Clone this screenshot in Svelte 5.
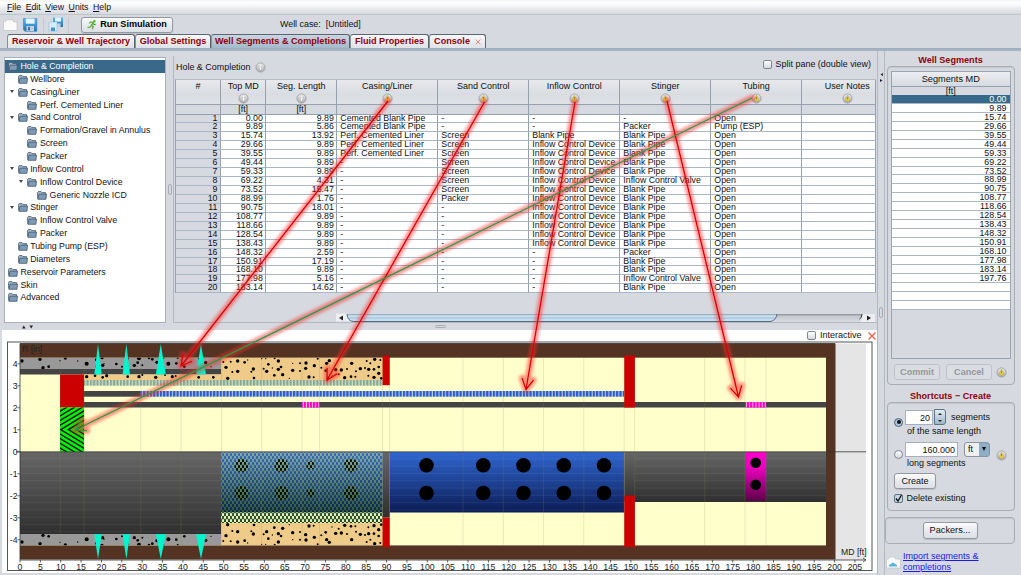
<script>
  const tabs = [
    { t: 'Reservoir & Well Trajectory', w: 128 },
    { t: 'Global Settings', w: 76 },
    { t: 'Well Segments & Completions', w: 139, active: true },
    { t: 'Fluid Properties', w: 79 },
    { t: 'Console', w: 57, close: true }
  ];
  const tree = [
    ['Hole & Completion', 0, 0], ['Wellbore', 1, 0], ['Casing/Liner', 1, 1], ['Perf. Cemented Liner', 2, 0],
    ['Sand Control', 1, 1], ['Formation/Gravel in Annulus', 2, 0], ['Screen', 2, 0], ['Packer', 2, 0],
    ['Inflow Control', 1, 1], ['Inflow Control Device', 2, 1], ['Generic Nozzle ICD', 3, 0],
    ['Stinger', 1, 1], ['Inflow Control Valve', 2, 0], ['Packer', 2, 0], ['Tubing Pump (ESP)', 1, 0],
    ['Diameters', 1, 0], ['Reservoir Parameters', 0, 0], ['Skin', 0, 0], ['Advanced', 0, 0]
  ];
  const heads = [['#', ''], ['Top MD', 'i'], ['Seg. Length', 'i'], ['Casing/Liner', 'w'], ['Sand Control', 'w'],
    ['Inflow Control', 'w'], ['Stinger', 'w'], ['Tubing', 'w'], ['User Notes', 'w']];
  const md = ['0.00', '9.89', '15.74', '29.66', '39.55', '49.44', '59.33', '69.22', '73.52', '88.99', '90.75',
    '108.77', '118.66', '128.54', '138.43', '148.32', '150.91', '168.10', '177.98', '183.14', '197.76'];
  const len = ['9.89', '5.86', '13.92', '9.89', '9.89', '9.89', '9.89', '4.31', '15.47', '1.76', '18.01', '9.89',
    '9.89', '9.89', '9.89', '2.59', '17.19', '9.89', '5.16', '14.62'];
  const rows = len.map((l, i) => [
    i + 1, md[i], l,
    i < 2 ? 'Cemented Blank Pipe' : i < 5 ? 'Perf. Cemented Liner' : '-',
    i < 2 ? '-' : i < 9 ? 'Screen' : i === 9 ? 'Packer' : '-',
    i < 2 ? '-' : i === 2 ? 'Blank Pipe' : i < 15 ? 'Inflow Control Device' : '-',
    i === 0 ? '-' : i === 1 || i === 15 ? 'Packer' : i === 7 || i === 18 ? 'Inflow Control Valve' : 'Blank Pipe',
    i === 1 ? 'Pump (ESP)' : 'Open', ''
  ]);
  const segments = [...md, '', '', ''];

  // Well schematic, in page units
  const X = (v) => 20 + v * 4.073;
  const Y = (r) => 451.8 - r * 22;
  const ticks = Array.from({ length: 42 }, (_, i) => i * 5);
  const radii = [4, 3, 2, 1, 0, -1, -2, -3, -4];
  const perfs = [[98, 3.7], [126.3, 3.7], [160.8, 5], [201, 5]];
  const sand = [[40,96,3],[62,95,3],[48,112,5],[83,93,5],[83,124,5],[53,145,5],[67,126,3],[104,97,4],[113,90,2],[130,117,5],[124,125,3],[132,144,4],[155,86,2],[167,86,2],[194,85,3],[205,93,5],[175,103,4],[161,116,3],[170,124,5],[187,114,2],[205,118,5],[213,111,4],[193,136,4],[218,134,5],[248,100,2],[248,121,5],[238,145,2],[270,100,3],[288,99,5],[287,115,5],[270,123,3],[297,141,5],[311,142,3],[313,107,5],[334,113,3],[323,86,3],[350,100,5],[358,92,5],[347,122,4],[377,119,5],[394,120,5],[386,133,3],[366,138,2],[425,100,5],[411,117,3],[404,143,5],[423,140,4],[436,140,3],[451,116,5],[438,124,3],[465,114,3],[476,118,5],[470,93,3],[494,88,5],[511,90,3],[481,100,3],[492,118,4],[506,111,4],[506,130,5],[492,142,5],[514,145,4],[475,137,3]]
    .map(([x, y, r]) => [210 + x / 3, 330 + y / 3, r / 3]);
  const cement = [[66,108,5],[120,103,5],[129,128,5],[146,125,4],[196,99,5],[180,107,2],[233,108,2],[260,116,6],[289,104,4],[289,125,4],[306,98,5],[312,116,2],[308,121,5],[349,117,4],[366,125,3],[383,101,3],[417,100,6],[413,113,4],[403,121,5],[427,121,3],[447,99,4],[457,103,4],[471,112,5],[490,98,3],[505,116,6],[533,99,3],[529,115,4],[553,125,4],[617,113,5],[633,125,2],[597,101,3]]
    .map(([x, y, r]) => [x / 3, 325 + y / 3, r / 3]);
  const strip = [[260,155,5],[285,152,4],[308,157,4],[320,152,5],[383,155,4],[417,155,5],[427,150,3],[467,157,5],[495,150,3],[517,155,5],[527,153,3],[596,157,4],[640,157,4]]
    .map(([x, y, r]) => [x / 3, 325 + y / 3, r / 3]);
  const blueHoles = [426.5, 483.3, 523.5, 563.8, 604];
  const screenHoles = [[241.5, 7], [281.5, 7], [310.5, 4.2], [351, 7]];
  const chevrons = Array.from({ length: 14 }, (_, i) => 6 + i * 7.8);

  const arrow = (x1, y1, x2, y2, color) => {
    const a = Math.atan2(y2 - y1, x2 - x1);
    const p = (d) => `${x2 - 12 * Math.cos(a + d)} ${y2 - 12 * Math.sin(a + d)}`;
    return { d: `M${x1} ${y1}L${x2} ${y2}M${p(0.5)}L${x2} ${y2}L${p(-0.5)}`, color };
  };
  const arrows = [
    arrow(388, 101, 181, 366, '#d40000'), arrow(484.5, 102, 327, 380, '#d40000'),
    arrow(575, 102, 526, 389.5, '#d40000'), arrow(667, 101, 738.5, 397, '#d40000'),
    arrow(752, 98, 75, 430, '#16a34a')
  ];
</script>

{#snippet folder()}
  <svg class="folder" width="10" height="9" viewBox="0 0 10 9">
    <path d="M.6 7.5V1.3L1.2.6h2.9l.8 1H8.6V3" fill="#a9bccd" stroke="#42586c" stroke-width=".8" />
    <path d="M2 3.1h7.5L8.9 8.3H.9z" fill="#7f9ab4" stroke="#3f5870" stroke-width=".8" />
  </svg>
{/snippet}

{#snippet badge(kind)}
  <svg class="badge" width="11" height="11" viewBox="0 0 11 11">
    <circle cx="5.5" cy="5.5" r="4.6" fill="url(#knob)" stroke="#999b9f" stroke-width=".8" />
    {#if kind === 'w'}
      <path d="M5.5 2.2 8 7.8H3z" fill="#f2d92c" stroke="#b8a334" stroke-width=".5" />
      <path d="M5.5 4.2v2" stroke="#6b6120" stroke-width=".7" />
    {:else}
      <path d="M5.5 4.8v3M5.5 2.8v1.1" stroke="#fff" stroke-width="1.3" />
    {/if}
  </svg>
{/snippet}

<div class="app">
  <nav class="menu">
    <span><u>F</u>ile</span><span><u>E</u>dit</span><span><u>V</u>iew</span><span><u>U</u>nits</span><span><u>H</u>elp</span>
  </nav>

  <div class="toolbar">
    <svg class="tools" width="76" height="20" viewBox="0 0 76 20">
      <defs>
        <linearGradient id="knob" x2="0" y2="1"><stop stop-color="#e9e9e9" /><stop offset="1" stop-color="#a9abae" /></linearGradient>
        <linearGradient id="disk" x2="0" y2="1"><stop stop-color="#5cb5ea" /><stop offset="1" stop-color="#2373b8" /></linearGradient>
      </defs>
      <path d="M3.5 15.5V6.5h2l1-1.7h7v2h3.5v8.7z" fill="#fafafa" stroke="#c3c5c8" stroke-width=".8" />
      <path d="M23.5 3.5h13.3v12.8H25l-1.5-1.5z" fill="url(#disk)" stroke="#2b7fbd" stroke-width=".6" />
      <path d="M25.8 3.5h8.8v5.2h-8.8z" fill="#e6f4fc" /><path d="M26.5 11h7.5v5.2h-7.5z" fill="#c8ced6" /><path d="M28 12h2v3.5h-2z" fill="#2c78b8" />
      <path d="M43.5 2v17M68.5 2v17" stroke="#bfc4cc" stroke-width=".8" />
      <path d="M53 2.5h10v9.5H53z" fill="url(#disk)" /><path d="M55 2.5h6v4h-6z" fill="#e6f4fc" /><path d="M55.5 8.5h5V12h-5z" fill="#c8ced6" />
      <path d="M49 7h8v9h-8z" fill="#d8edf9" stroke="#8fc0e0" stroke-width=".6" /><path d="M51 12.5h4V16h-4z" fill="#4b94cb" />
    </svg>
    <button class="btn run">
      <svg width="10" height="10" viewBox="0 0 10 10" fill="none" stroke="#4ea72e" stroke-width="1.2">
        <path d="M2 3.2 4 1.8 6.2 2.6 4.5 5.2 6.3 6.6 5.2 9.2M4.5 5.2 3.2 7 .6 7.4M6 3.2 7 4.6 8.8 4.4" /><circle cx="7.4" cy="1.3" r=".6" fill="#4ea72e" />
      </svg>Run Simulation
    </button>
    <span class="case">Well case:&nbsp; [Untitled]</span>
  </div>

  <div class="tabs">
    {#each tabs as tab}
      <div class="tab" class:active={tab.active} style="width:{tab.w}px">
        {tab.t}
        {#if tab.close}<svg width="6" height="6" viewBox="0 0 6 6"><path d="M.5.5l5 5M5.5.5l-5 5" stroke="#f08a80" stroke-width="1" /></svg>{/if}
      </div>
    {/each}
  </div>

  <main>
    <section class="left">
      <div class="upper">
        <div class="tree">
          {#each tree as [name, depth, open], i}
            <div class="node" class:sel={i === 0} style="padding-left:{3 + depth * 9.7}px">
              {#if depth}<span class="twist" class:open={open}></span>{/if}
              {@render folder()}<span>{name}</span>
            </div>
          {/each}
        </div>
        <div class="vsplit"><i></i></div>
        <div class="tablepane">
          <div class="panehead">
            <span class="ptitle">Hole &amp; Completion {@render badge('i')}</span>
            <span class="split"><b class="box"></b>Split pane (double view)</span>
          </div>
          <div class="grid">
            {#each heads as [h, k], i}
              <div class="th"><div class:wide={i === 8}><span>{h}</span>{#if k}{@render badge(k)}{/if}</div></div>
            {/each}
            {#each heads as h, i}
              <div class="unit">{i === 1 || i === 2 ? '[ft]' : ''}</div>
            {/each}
            {#each rows as row}
              {#each row as cell, c}
                <div class="td" class:num={c < 3} class:idx={c === 0}>{cell}</div>
              {/each}
            {/each}
          </div>
          <svg class="scroll" width="540" height="10" viewBox="0 0 540 10">
            <defs>
              <linearGradient id="thumb" x2="0" y2="1"><stop stop-color="#7d9fb8" /><stop offset=".25" stop-color="#d3e3ef" /><stop offset=".55" stop-color="#a9c9e0" /><stop offset=".85" stop-color="#d5ebfa" /><stop offset="1" stop-color="#5e7b92" /></linearGradient>
              <linearGradient id="track" x2="0" y2="1"><stop stop-color="#8c9096" /><stop offset=".3" stop-color="#c4c7cd" /><stop offset="1" stop-color="#d9dce2" /></linearGradient>
            </defs>
            <rect y="1" width="539" height="8" fill="url(#track)" />
            <path d="M0 .5h11q.5 8 7 8H0z" fill="#eceef2" />
            <path d="M11 1q.5 7.5 7 7.500H434q6-.5 7-7.500z" fill="url(#thumb)" />
            <path d="M11 1q.5 7.500 7 7.500H434q6-.5 7-7.500" fill="none" stroke="#44596b" stroke-width=".8" />
            <path d="M526 1h13v8h-16q3-1 3-8z" fill="#eceef2" /><path d="M523.5 6q2.500-1 2.500-5" fill="none" stroke="#333" />
            <path d="M7 2.500v5L3 5zM531 2.500v5l4-2.500z" fill="#222" />
          </svg>
        </div>
      </div>
      <div class="hsplit">
        <svg width="12" height="4" viewBox="0 0 12 4"><path d="M0 3.500 1.800.5l1.800 3zM7.400.5h3.600L9.200 3.500z" fill="#222" /></svg><i></i>
      </div>
      <div class="chart">
        <div class="charthead"><b class="box"></b>Interactive
          <svg width="8" height="8" viewBox="0 0 8 8"><path d="M.5.5l7 7M7.500.5l-7 7" stroke="#ef5b45" stroke-width="1.200" /></svg>
        </div>
        <svg class="plot" width="877" height="232" viewBox="0 341 877 232">
          <defs>
            <linearGradient id="pipe" x2="0" y2="1"><stop stop-color="#666" /><stop offset="1" stop-color="#2f2f2f" /></linearGradient>
            <linearGradient id="blue" x2="0" y2="1"><stop stop-color="#2f66d0" /><stop offset="1" stop-color="#0b1c55" /></linearGradient>
            <linearGradient id="mag" x2="0" y2="1"><stop stop-color="#ff00cc" /><stop offset=".3" stop-color="#f000c0" /><stop offset="1" stop-color="#5c0048" /></linearGradient>
            <linearGradient id="mesh" x2="0" y2="1"><stop stop-color="#86ab9a" /><stop offset=".55" stop-color="#4c7a5a" /><stop offset="1" stop-color="#1e4a20" /></linearGradient>
            <pattern id="holes" width="4" height="6" patternUnits="userSpaceOnUse">
              <rect width="4" height="6" fill="#fff" /><ellipse cx="1" cy="1.5" rx="1" ry="1.8" /><ellipse cx="3" cy="4.5" rx="1" ry="1.8" />
            </pattern>
            <mask id="meshmask"><rect x="221" y="450" width="162" height="75" fill="url(#holes)" /></mask>
            <pattern id="ribs" width="7" height="7.3" patternUnits="userSpaceOnUse" y="452"><rect y="6.3" width="7" height="1" fill="#fff" opacity=".06" /></pattern>
            <pattern id="sbar" width="3.33" height="6" patternUnits="userSpaceOnUse"><rect width="3.33" height="6" fill="#cfdcc0" /><rect width="2" height="6" fill="#86a995" /></pattern>
            <pattern id="bbar" width="3.33" height="6" patternUnits="userSpaceOnUse"><rect width="3.33" height="6" fill="#b5c8e8" /><rect width="2.2" height="6" fill="#2b5cc8" /></pattern>
            <pattern id="mbar" width="3.1" height="6" patternUnits="userSpaceOnUse"><rect width="3.1" height="6" fill="#ffc4e8" /><rect width="2.2" height="6" fill="#ff00cc" /></pattern>
            <clipPath id="pump"><rect x="60" y="407.5" width="24" height="44.3" /></clipPath>
            <clipPath id="rock"><rect x="20" y="357.7" width="363" height="23" /></clipPath>
          </defs>
          <rect x="7.5" y="342" width="864.5" height="228.5" fill="#fff" stroke="#555" />
          <rect x="835" y="343.5" width="31" height="216.5" fill="#e5e5e5" />
          <rect x="20" y="343.5" width="815.5" height="216" fill="#553322" />
          <rect x="20" y="357.7" width="806" height="187.7" fill="#ffffcc" />

          {#snippet formation()}
            <g clip-path="url(#rock)">
              <rect x="20" y="357.7" width="201" height="11.5" fill="#999" />
              <rect x="221" y="357.7" width="161.5" height="22.8" fill="#eecb88" />
              {#each [...cement, ...sand] as [x, y, r]}<circle cx={x} cy={y} {r} />{/each}
            </g>
          {/snippet}
          {@render formation()}
          <g transform="matrix(1 0 0 -1 0 903)">{@render formation()}</g>
          <rect x="20" y="369" width="201" height="5.5" fill="#444" />
          <rect x="84" y="374.5" width="137" height="5.7" fill="#eecb88" />
          {#each strip as [x, y, r]}<circle cx={x} cy={y} {r} />{/each}
          <rect x="84" y="380" width="298.5" height="5.7" fill="url(#sbar)" />
          <rect x="84" y="391" width="56" height="5.7" fill="#444" />
          <rect x="140" y="391" width="484" height="5.7" fill="url(#bbar)" />
          <rect x="84" y="402" width="742" height="5.5" fill="#444" />
          <rect x="302" y="402" width="17.5" height="5.5" fill="url(#mbar)" />
          <rect x="745.5" y="402" width="20.7" height="5.5" fill="url(#mbar)" />
          <rect x="60" y="374.5" width="24" height="33" fill="#cc0000" />
          <rect x="382.5" y="355.7" width="7.3" height="29.5" fill="#cc0000" />
          <rect x="624.2" y="355.7" width="10.8" height="51.8" fill="#cc0000" />
          <g clip-path="url(#pump)">
            <rect x="60" y="407" width="24" height="45" fill="#00f000" />
            {#each chevrons as c}<path d="M{c + 60} {429.6 - 36}L{c} 429.6L{c + 60} {429.6 + 36}" fill="none" stroke="#000" stroke-width="1.3" />{/each}
          </g>

          <rect x="20" y="452" width="201" height="82" fill="url(#pipe)" />
          <rect x="221" y="452" width="161.5" height="60.5" fill="url(#blue)" />
          {#each screenHoles as [cx, r]}<circle {cx} cy="465.5" {r} /><circle {cx} cy="493" {r} />{/each}
          <rect x="221" y="512.5" width="161.5" height="10.5" fill="#ffffcc" />
          <rect x="221" y="452" width="161.5" height="71" fill="url(#mesh)" mask="url(#meshmask)" />
          <rect x="382.5" y="452" width="7.3" height="65.5" fill="url(#pipe)" />
          <rect x="382.5" y="517.5" width="7.3" height="29.5" fill="#cc0000" />
          <rect x="389.8" y="452" width="234.4" height="60.5" fill="url(#blue)" />
          <rect x="624.2" y="452" width="201.8" height="50" fill="url(#pipe)" />
          <rect x="624.2" y="495.5" width="10.8" height="51.5" fill="#cc0000" />
          <rect x="745.5" y="452" width="20.7" height="49" fill="url(#mag)" />
          <path d="M20 452H221V534H20zM389.8 452H624V512.5H389.8zM635 452H745V501H635zM766.5 452H826V501H766.5z" fill="url(#ribs)" />
          {#each blueHoles as cx}<circle {cx} cy="465.3" r="7.3" /><circle {cx} cy="493" r="7.3" />{/each}
          <circle cx="755.7" cy="462.7" r="5.3" /><circle cx="755.7" cy="484.7" r="5.3" />
          {#each md.slice(1, 20) as v}<path d="M{X(+v)} 357.7V545" stroke="#8a8660" stroke-width=".7" opacity=".28" />{/each}
          {#each perfs as [x, w]}
            <path d="M{x} 344L{x + w} 374.5H{x - w}zM{x - w} 534.3H{x + w}L{x} 559z" fill="#00f5cf" />
          {/each}

          <path d="M20 343.5H835M16 451.8H866M20 343.5V560H865M863 558l3 2-3 2" fill="none" stroke="#333" stroke-width=".8" />
          {#each ticks as t}
            <path d="M{X(t)} 560v2.5" stroke="#333" stroke-width=".8" />
            <text x={X(t)} y="570" text-anchor="middle">{t}</text>
          {/each}
          {#each radii as r}
            <path d="M17.5 {Y(r)}H20" stroke="#333" stroke-width=".8" />
            <text x="17.5" y={Y(r) + 3.5} text-anchor="end">{r}</text>
          {/each}
          <text x="22" y="351.8">R [in]</text>
          <text x="841" y="554.8">MD [ft]</text>
        </svg>
      </div>
    </section>

    <div class="rsplit"><svg width="3" height="9" viewBox="0 0 3 9"><path d="M3 0v3L.5 1.5zM0 6v3l2.5-1.5z" fill="#222" /></svg><i></i></div>

    <aside>
      <h3>Well Segments</h3>
      <div class="group seggroup">
        <div class="segtable">
          <div class="sh">Segments MD</div>
          <div class="su">[ft]</div>
          {#each segments as s, i}<div class="sr" class:sel={i === 0}>{s}</div>{/each}
        </div>
        <div class="actions">
          <button class="btn off">Commit</button><button class="btn off">Cancel</button>{@render badge('w')}
        </div>
      </div>
      <h3 class="second">Shortcuts − Create</h3>
      <div class="group create">
        <div class="opt">
          <span class="radio on"></span>
          <span class="field n">20</span><span class="spin"><em></em><em class="dn"></em></span><span class="after">segments</span>
        </div>
        <div class="note">of the same length</div>
        <div class="opt two">
          <span class="radio"></span>
          <span class="field l">160.000</span><span class="combo">ft<em></em></span>{@render badge('w')}
        </div>
        <div class="note">long segments</div>
        <button class="btn mk">Create</button>
        <div class="chk"><svg width="9" height="9" viewBox="0 0 9 9"><rect x=".5" y=".5" width="8" height="8" rx="1.5" fill="#c5d5e2" stroke="#5c7386" /><path d="M2 4.5 4 7l3.5-6" fill="none" stroke="#111" stroke-width="1.3" /></svg>Delete existing</div>
      </div>
      <div class="group pack"><button class="btn">Packers...</button></div>
      <div class="import">
        <svg width="15" height="13" viewBox="0 0 15 13"><path d="M.5 12V3h2l1-2h6v2h5v9z" fill="#fafafa" stroke="#c3c7cc" stroke-width=".8" /><path d="M3 10.5V9l4-2.5L11 9v1.5z" fill="#59b3de" /></svg>
        <a href="#top">Import segments &amp;<br />completions</a>
      </div>
    </aside>
  </main>

  <svg class="overlay" width="1021" height="575" viewBox="0 0 1021 575" fill="none">
    <defs><filter id="glow" x="-20%" y="-20%" width="140%" height="140%"><feGaussianBlur stdDeviation="1.5" /></filter></defs>
    {#each arrows as a}<path d={a.d} stroke="#ff2a2a" stroke-width="6.5" opacity=".5" stroke-linejoin="round" stroke-linecap="round" filter="url(#glow)" />{/each}
    {#each arrows as a}<path d={a.d} stroke={a.color} stroke-width="1.25" />{/each}
  </svg>
</div>

<style>
  :global(body) { margin: 0; background: #d6d9df; }
  .app { position: relative; display: flex; flex-direction: column; width: 1021px; height: 575px; overflow: hidden; background: #d6d9df; color: #111; font: 8.75px/9px "Liberation Sans", Arial, sans-serif; white-space: nowrap; }
  svg { display: block; flex: none; }
  button { font: inherit; color: inherit; }
  .menu { box-sizing: border-box; height: 15px; display: flex; gap: 4.5px; padding: 3px 0 0 7px; background: linear-gradient(#f4f5f6, #fff 20%, #d6d9df); border-bottom: 1px solid #c0c4cb; }
  .toolbar { height: 19px; display: flex; align-items: center; }
  .tools { margin-right: 5px; }
  .btn { box-sizing: border-box; padding: 0; border: 1px solid #9499a0; border-radius: 3px; background: linear-gradient(#fbfbfc, #e8eaed 50%, #dcdfe4); box-shadow: 0 1px 1px #b9bdc4; display: flex; align-items: center; justify-content: center; }
  .run { width: 92px; height: 16px; font-weight: bold; font-size: 9.1px; gap: 3px; color: #000; }
  .case { margin-left: 107px; font-size: 8.9px; }
  .tabs { box-sizing: border-box; height: 17px; display: flex; padding: 0 0 0 7px; border-bottom: 3px solid #7f93a9; border-image: linear-gradient(#5f6f80, #8da0b5 50%, #a8b5c4) 3; }
  .tab { box-sizing: border-box; display: flex; align-items: center; justify-content: center; gap: 5px; border: 1px solid #5c6670; border-left-color: #8a9098; border-bottom: 0; border-radius: 3px 3px 0 0; background: linear-gradient(#f7f8f9, #dfe2e7); color: #900008; font-weight: bold; font-size: 9.1px; }
  .tab.active { background: linear-gradient(#c8d6e2, #a4b9cb); }
  main { flex: 1; display: flex; min-height: 0; }
  .left { width: 877px; display: flex; flex-direction: column; }
  .upper { height: 272px; display: flex; }
  .tree { box-sizing: border-box; margin: 6px 0 0 4px; width: 162px; height: 266px; padding-top: 2px; background: #fff; border: 1px solid #a9b0b9; }
  .node { box-sizing: border-box; height: 12.87px; display: flex; align-items: center; gap: 2.5px; position: relative; }
  .node.sel { background: #39698a; color: #fff; }
  .twist { position: absolute; margin-left: -8px; width: 4px; height: 4px; }
  .twist.open::before { content: ""; display: block; border: 2px solid transparent; border-top: 3.5px solid #444; border-bottom: 0; }
  .vsplit { width: 8px; display: flex; align-items: center; justify-content: center; box-sizing: border-box; border-right: 1px solid #b4b9c1; margin-top: 5px; }
  .vsplit i { width: 2px; height: 9px; border: 1px solid #a7acb4; border-radius: 2px; }
  .tablepane { width: 703px; display: flex; flex-direction: column; box-sizing: border-box; border-bottom: 1px solid #b4b9c1; }
  .panehead { display: flex; justify-content: space-between; height: 28px; font-size: 8.95px; }
  .ptitle { display: flex; gap: 4px; align-items: center; height: 32px; padding-left: 2px; }
  .split { display: flex; align-items: center; gap: 4px; height: 26px; padding-right: 6px; }
  .box { box-sizing: border-box; width: 9px; height: 9px; border: 1px solid #7e868f; border-radius: 2px; background: linear-gradient(#fff, #d5d8dd); }
  .grid { margin-left: 1px; width: 701px; box-sizing: border-box; border-left: 1px solid #98a3b0; border-top: 1px solid #b6bcc4; display: grid; grid-template-columns: 45px 45.3px 71px 101px 91px 91px 91px 90.5px 74.5px; grid-template-rows: 25px 9.5px; grid-auto-rows: 8.95px; }
  .th, .unit, .td { box-sizing: border-box; border-right: 1px solid #93a1b1; border-bottom: 1px solid #93a1b1; min-width: 0; }
  .th { overflow: hidden; background: linear-gradient(#e7e9ec, #d9dce1 60%, #e0e2e7); font-size: 9px; }
  .th > div { display: flex; flex-direction: column; align-items: center; padding-top: 2px; gap: 2px; }
  .th > div.wide { width: 91px; }
  .unit { text-align: center; line-height: 9.5px; }
  .td { background: #fff; padding-left: 3px; line-height: 7.4px; font-size: 8.8px; border-bottom-color: #a9b8c8; }
  .td.num { text-align: right; padding: 0 2.5px 0 0; }
  .td.idx { background: #d6d9df; }
  .scroll { margin: 20px 0 0 162px; }
  .hsplit { height: 7px; box-sizing: border-box; display: flex; align-items: center; padding-left: 22px; }
  .hsplit i { margin-left: 401px; width: 9px; height: 1px; border: 1px solid #a7acb4; border-radius: 2px; }
  .chart { margin-left: 2px; height: 243px; background: #fff; }
  .charthead { height: 11px; display: flex; align-items: center; justify-content: flex-end; gap: 3.5px; padding-right: 1px; font-size: 9px; }
  .charthead svg { margin-left: 3px; }
  .plot { margin-left: -2px; }
  .plot text { font: 8.7px "Liberation Sans", Arial, sans-serif; fill: #222; }
  .rsplit { width: 8px; box-sizing: border-box; border-left: 1px solid #b4b9c1; border-right: 1px solid #b4b9c1; display: flex; flex-direction: column; align-items: center; padding-top: 22px; }
  .rsplit i { margin-top: 225px; width: 2px; height: 9px; border: 1px solid #a7acb4; border-radius: 2px; }
  aside { width: 136px; display: flex; flex-direction: column; }
  h3 { margin: 5px 5px 1px 0; text-align: center; font-size: 9.1px; line-height: 9px; color: #900008; }
  .group { box-sizing: border-box; margin-left: 2px; width: 128px; border: 1.5px solid #a9adb4; border-radius: 4px; box-shadow: inset 0 1px 1px #c3c6cc; }
  .seggroup { height: 319px; padding: 4px 0 0 3px; }
  .segtable { box-sizing: border-box; width: 119.5px; height: 288px; border: 1px solid #9aa5b1; font-size: 8.85px; }
  .sh { box-sizing: border-box; height: 14.5px; line-height: 14px; text-align: center; background: linear-gradient(#eceef1, #d6d9df); border-bottom: 1px solid #93a1b1; font-size: 9.2px; }
  .su { box-sizing: border-box; height: 8.5px; text-align: center; line-height: 8.5px; }
  .sr { box-sizing: border-box; height: 8.95px; background: #fff; border-bottom: 1px solid #a9b8c8; text-align: right; padding-right: 3px; line-height: 8px; }
  .sr.sel { background: #39698a; color: #fff; }
  .actions { display: flex; align-items: center; padding-top: 5px; gap: 6px; }
  .actions .btn { width: 46px; height: 16px; margin-left: 3px; margin-right: -3px; }
  .actions .badge { margin-left: 1px; }
  .btn.off { font-weight: bold; font-size: 9.1px; color: #94979c; border-color: #bfc3c9; background: #dadde2; box-shadow: none; }
  h3.second { margin-top: 7px; }
  .create { height: 109px; padding: 6px 0 0 5px; font-size: 9px; }
  .opt { display: flex; align-items: center; height: 16px; }
  .opt.two { margin-top: 3px; height: 16px; }
  .radio { box-sizing: border-box; width: 9px; height: 9px; border: 1px solid #7e868f; border-radius: 50%; background: linear-gradient(#fff, #d5d8dd); margin: 10px 2px 0 1px; display: flex; align-items: center; justify-content: center; }
  .radio.on { background: #aec5d8; border-color: #4e6478; }
  .radio.on::after { content: ""; width: 4px; height: 4px; border-radius: 50%; background: #111; }
  .field { box-sizing: border-box; height: 15px; line-height: 14px; border: 1px solid #a9afb7; background: #fff; text-align: right; padding-right: 2px; }
  .n { width: 28px; }
  .l { width: 53px; }
  .spin { box-sizing: border-box; width: 12px; height: 16px; margin-left: 1px; border: 1px solid #5f7386; border-radius: 0 3px 3px 0; background: linear-gradient(#e3edf5, #9db5c9); display: flex; flex-direction: column; align-items: center; justify-content: space-around; }
  .spin em { width: 0; border: 2px solid transparent; border-bottom: 2.5px solid #222; border-top: 0; }
  .spin em.dn { border-bottom: 0; border-top: 2.5px solid #222; }
  .after { margin-left: 5px; }
  .note { padding-left: 14px; line-height: 12.5px; height: 13px; }
  .combo { box-sizing: border-box; width: 26px; height: 15px; margin-left: 6px; padding-left: 3px; border: 1px solid #8894a0; border-radius: 3px; background: linear-gradient(90deg, #eef0f2 60%, #8fadc5 60%); display: flex; align-items: center; justify-content: space-between; }
  .combo em { border: 2px solid transparent; border-top: 4px solid #111; border-bottom: 0; margin-right: 3px; }
  .two .badge { margin: 13px 0 0 6px; }
  .mk { width: 42px; height: 16px; margin-top: 3px; margin-left: 1px; font-size: 9px; }
  .chk { display: flex; align-items: center; gap: 3.5px; padding-top: 5px; margin-left: 1px; }
  .pack { margin: 6px 0 0 0; width: 130px; height: 27px; display: flex; align-items: center; justify-content: center; font-size: 9.2px; }
  .pack .btn { width: 55px; height: 17px; }
  .import { display: flex; gap: 2px; margin-top: 7px; padding-left: 1px; font-size: 9px; line-height: 11px; align-items: center; }
  .import a { color: #1a1aee; text-decoration: underline; }
  .overlay { position: absolute; left: 0; top: 0; pointer-events: none; }
</style>
